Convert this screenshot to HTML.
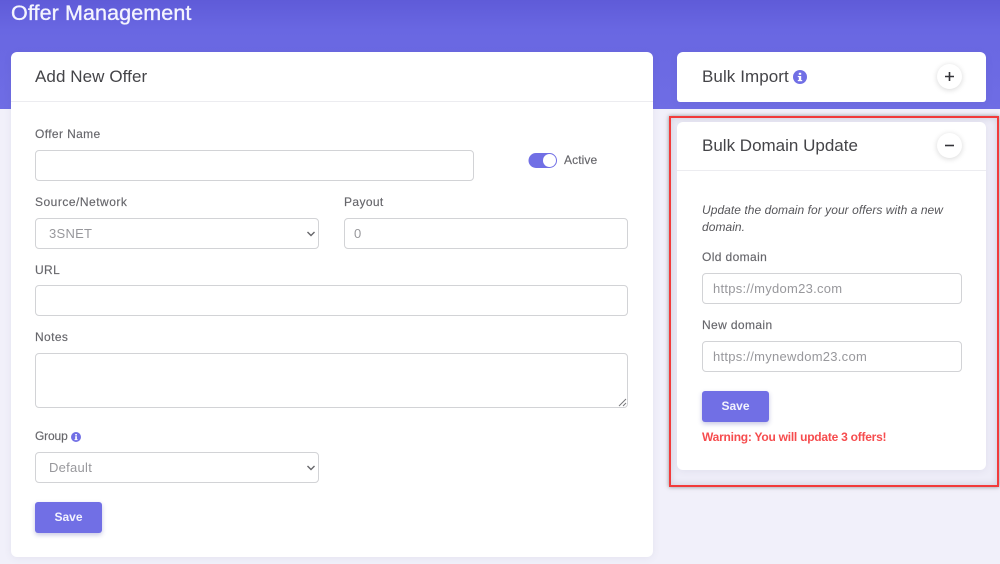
<!DOCTYPE html>
<html><head><meta charset="utf-8">
<style>
*{box-sizing:border-box}
html,body{margin:0;padding:0}
body{width:1000px;height:564px;overflow:hidden;background:#f1f0fa;position:relative;font-family:"Liberation Sans",sans-serif;color:#4a4a4f}
.a{position:absolute;white-space:nowrap}
.hdr{left:0;top:0;width:1000px;height:109px;background:linear-gradient(180deg,#5f5bd8 0,#6967e2 30px,#6f6de4 100%)}
.card{background:#fff;border-radius:6px;box-shadow:0 1px 8px rgba(80,80,120,.08)}
.line{height:1px;background:#ececf0}
.lbl{font-size:12px;line-height:14px;color:#66666b;letter-spacing:.38px;-webkit-text-stroke:.15px #66666b}
.ttl{font-size:17px;line-height:20px;color:#444448;letter-spacing:.08px}
.inp{background:#fff;border:1px solid #d2d3d6;border-radius:4px;font-size:13px;color:#98989c;padding-left:13px;letter-spacing:.27px}
.btn{background:#716fe5;border-radius:3px;color:#f2f2fd;font-size:12px;font-weight:bold;text-align:center;box-shadow:0 2px 5px rgba(70,70,160,.3);letter-spacing:0}
.rnd{width:25px;height:25px;border-radius:50%;background:#fff;box-shadow:0 1px 6px rgba(0,0,0,.16)}
</style></head>
<body>
<div class="a hdr"></div>
<div class="a" style="left:11px;top:0;font-size:21.5px;line-height:26px;color:#f4f4fe;letter-spacing:.1px;-webkit-text-stroke:.35px #f4f4fe">Offer Management</div>

<div class="a card" style="left:11px;top:52px;width:642px;height:505px"></div>
<div class="a ttl" style="left:35px;top:67px">Add New Offer</div>
<div class="a line" style="left:11px;top:101px;width:642px"></div>

<div class="a lbl" style="left:35px;top:127px">Offer Name</div>
<div class="a inp" style="left:35px;top:150px;width:439px;height:31px"></div>

<svg class="a" style="left:528px;top:152px" width="30" height="17" viewBox="0 0 30 17"><rect x=".5" y="1" width="28.5" height="15" rx="7.5" fill="#716fe5"/><circle cx="21.5" cy="8.5" r="6.5" fill="#fff"/></svg>
<div class="a lbl" style="left:564px;top:153px;letter-spacing:.1px">Active</div>

<div class="a lbl" style="left:35px;top:195px;letter-spacing:.5px">Source/Network</div>
<div class="a inp" style="left:35px;top:218px;width:284px;height:31px;line-height:29px">3SNET</div>
<svg class="a" style="left:306px;top:230px" width="10" height="8" viewBox="0 0 10 8"><path d="M1.5 2 L5 5.5 L8.5 2" fill="none" stroke="#66666a" stroke-width="1.4"/></svg>

<div class="a lbl" style="left:344px;top:195px">Payout</div>
<div class="a inp" style="left:344px;top:218px;width:284px;height:31px;line-height:29px;padding-left:9px">0</div>

<div class="a lbl" style="left:35px;top:263px">URL</div>
<div class="a inp" style="left:35px;top:285px;width:593px;height:31px"></div>

<div class="a lbl" style="left:35px;top:330px">Notes</div>
<div class="a inp" style="left:35px;top:353px;width:593px;height:55px"></div>
<svg class="a" style="left:617px;top:397px" width="10" height="10" viewBox="0 0 10 10"><path d="M9 2 L2 9 M9 6 L6 9" stroke="#77777b" stroke-width="1" fill="none"/></svg>

<div class="a lbl" style="left:35px;top:429px;letter-spacing:-.15px">Group</div>
<svg class="a" style="left:70.5px;top:431.5px" width="10" height="10" viewBox="0 0 10 10"><circle cx="5" cy="5" r="5" fill="#716fe5"/><rect x="4.2" y="4.2" width="1.7" height="3.4" fill="#fff"/><rect x="4.2" y="2" width="1.7" height="1.5" fill="#fff"/><rect x="3.5" y="7.2" width="3.1" height=".9" fill="#fff"/></svg>
<div class="a inp" style="left:35px;top:452px;width:284px;height:31px;line-height:29px">Default</div>
<svg class="a" style="left:306px;top:464px" width="10" height="8" viewBox="0 0 10 8"><path d="M1.5 2 L5 5.5 L8.5 2" fill="none" stroke="#66666a" stroke-width="1.4"/></svg>

<div class="a btn" style="left:35px;top:502px;width:67px;height:31px;line-height:30px">Save</div>

<div class="a card" style="left:677px;top:52px;width:309px;height:50px;border-radius:6px 6px 3px 3px"></div>
<div class="a ttl" style="left:702px;top:67px">Bulk Import</div>
<svg class="a" style="left:793px;top:70px" width="14" height="14" viewBox="0 0 14 14"><circle cx="7" cy="7" r="7" fill="#716fe5"/><rect x="5.8" y="6" width="2.4" height="4.6" fill="#fff"/><rect x="5.8" y="2.8" width="2.4" height="2" fill="#fff"/><rect x="4.8" y="10" width="4.4" height="1.2" fill="#fff"/><rect x="4.8" y="6" width="2" height="1.1" fill="#fff"/></svg>
<div class="a rnd" style="left:937px;top:64px"></div>
<svg class="a" style="left:945px;top:72px" width="9" height="9" viewBox="0 0 9 9"><path d="M4.5 0V9M0 4.5H9" stroke="#333338" stroke-width="1.6"/></svg>

<div class="a" style="left:669px;top:116px;width:330px;height:371px;border:2px solid #f23b3b;box-shadow:0 0 4px rgba(60,60,60,.55),inset 0 0 7px rgba(90,90,120,.22);background:#eeedf8"></div>

<div class="a card" style="left:677px;top:122px;width:309px;height:348px"></div>
<div class="a ttl" style="left:702px;top:136px;letter-spacing:0">Bulk Domain Update</div>
<div class="a line" style="left:677px;top:170px;width:309px"></div>
<div class="a rnd" style="left:937px;top:133px"></div>
<svg class="a" style="left:945px;top:141px" width="9" height="9" viewBox="0 0 9 9"><path d="M0 4.5H9" stroke="#333338" stroke-width="1.6"/></svg>

<div class="a" style="left:702px;top:202px;font-size:12px;line-height:17px;font-style:italic;color:#56565a;letter-spacing:.05px">Update the domain for your offers with a new<br>domain.</div>

<div class="a lbl" style="left:702px;top:250px">Old domain</div>
<div class="a inp" style="left:702px;top:273px;width:260px;height:31px;line-height:29px;padding-left:10px">https://mydom23.com</div>
<div class="a lbl" style="left:702px;top:318px">New domain</div>
<div class="a inp" style="left:702px;top:341px;width:260px;height:31px;line-height:29px;padding-left:10px">https://mynewdom23.com</div>

<div class="a btn" style="left:702px;top:391px;width:67px;height:31px;line-height:30px">Save</div>
<div class="a" style="left:702px;top:429px;font-size:12px;line-height:16px;font-weight:bold;color:#f64c4e;letter-spacing:-.24px">Warning: You will update 3 offers!</div>
</body></html>
